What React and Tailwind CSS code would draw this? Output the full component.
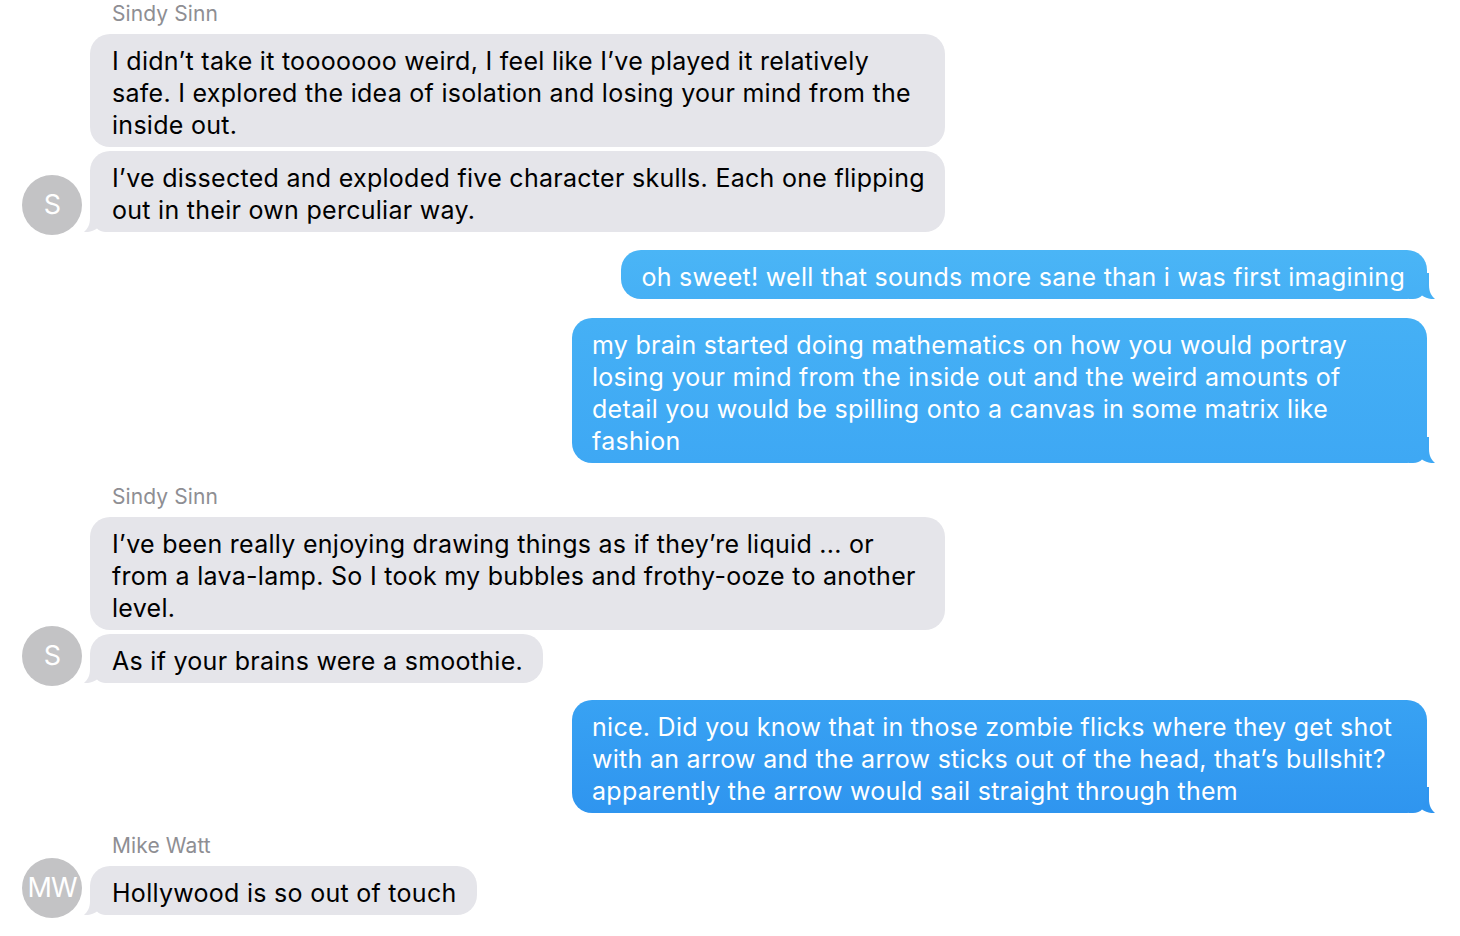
import React from "react";

// bubble tail, drawn under the bottom corner of the last bubble in a run
function Tail({ side, color }) {
  if (side === "left") {
    return (
      <svg
        className="absolute -left-[6px] bottom-0"
        width="26"
        height="26"
        viewBox="0 0 26 26"
      >
        <path
          d="M6 0 L6 12 C6 19 3.5 23 0 26 C5 26.5 9.5 25 13 22.5 C15 24.5 18 26 22 26 L26 26 L26 0 Z"
          fill={color}
        />
      </svg>
    );
  }
  return (
    <svg
      className="absolute -right-[8px] bottom-0"
      width="26"
      height="26"
      viewBox="0 0 26 26"
    >
      <path
        d="M20 0 L20 12 C20 19 22.5 23 26 26 C21 26.5 16.5 25 13 22.5 C11 24.5 8 26 4 26 L0 26 L0 0 Z"
        fill={color}
      />
    </svg>
  );
}

function Received({ children, tail }) {
  return (
    <div className="relative max-w-[855px] self-start">
      {tail && <Tail side="left" color="#e5e5ea" />}
      <div className="relative bg-[#e5e5ea] text-black rounded-[20px] pl-[22px] pr-[20px] pt-[11px] pb-[6px]">
        {children}
      </div>
    </div>
  );
}

function Sent({ children, bg, tailColor }) {
  return (
    <div className="relative max-w-[855px] self-end mr-[33px]">
      <Tail side="right" color={tailColor} />
      <div
        className={`relative text-white rounded-[20px] pl-[20px] pr-[22px] pt-[11px] pb-[6px] ${bg}`}
      >
        {children}
      </div>
    </div>
  );
}

function Avatar({ label }) {
  // negative top margin so a short bubble is not pushed down by the avatar
  return (
    <div className="w-[60px] h-[60px] -mt-[24px] -mb-[3px] rounded-full bg-[#c3c3c5] text-white flex items-center justify-center text-[27px] tracking-[-1px]">
      {label}
    </div>
  );
}

function Group({ name, initials, messages, className }) {
  return (
    <div className={`flex flex-col ${className}`}>
      <div className="pl-[112px] h-[28px] leading-[28px] mb-[6px] text-[21px] tracking-[0.1px] text-[#8e8e93]">
        {name}
      </div>
      <div className="flex items-end">
        <div className="w-[90px] pl-[22px] shrink-0">
          <Avatar label={initials} />
        </div>
        <div className="flex flex-col gap-[4px]">
          {messages.map((m, i) => (
            <Received key={i} tail={i === messages.length - 1}>
              {m}
            </Received>
          ))}
        </div>
      </div>
    </div>
  );
}

export default function App() {
  return (
    <div className="w-[1460px] h-[936px] bg-white overflow-hidden font-['Inter',sans-serif] text-[25px] leading-[32px] tracking-[0.28px]">
      <div className="flex flex-col">
        <Group
          name="Sindy Sinn"
          initials="S"
          messages={[
            "I didn’t take it tooooooo weird, I feel like I’ve played it relatively safe. I explored the idea of isolation and losing your mind from the inside out.",
            "I’ve dissected and exploded five character skulls. Each one flipping out in their own perculiar way.",
          ]}
        />

        <div className="flex flex-col mt-[18px] gap-[19px]">
          <Sent
            bg="bg-gradient-to-b from-[#4ab5f6] to-[#46b0f5]"
            tailColor="#46b0f5"
          >
            oh sweet! well that sounds more sane than i was first imagining
          </Sent>
          <Sent
            bg="bg-gradient-to-b from-[#45b0f5] to-[#3ea8f4]"
            tailColor="#3ea8f4"
          >
            my brain started doing mathematics on how you would portray losing
            your mind from the inside out and the weird amounts of detail you
            would be spilling onto a canvas in some matrix like fashion
          </Sent>
        </div>

        <Group
          className="mt-[20px]"
          name="Sindy Sinn"
          initials="S"
          messages={[
            "I’ve been really enjoying drawing things as if they’re liquid ... or from a lava-lamp. So I took my bubbles and frothy-ooze to another level.",
            "As if your brains were a smoothie.",
          ]}
        />

        <div className="flex flex-col mt-[17px]">
          <Sent
            bg="bg-gradient-to-b from-[#38a2f3] to-[#2f95ef]"
            tailColor="#2f95ef"
          >
            nice. Did you know that in those zombie flicks where they get shot
            with an arrow and the arrow sticks out of the head, that’s bullshit?
            apparently the arrow would sail straight through them
          </Sent>
        </div>

        <Group
          className="mt-[19px]"
          name="Mike Watt"
          initials="MW"
          messages={["Hollywood is so out of touch"]}
        />
      </div>
    </div>
  );
}
